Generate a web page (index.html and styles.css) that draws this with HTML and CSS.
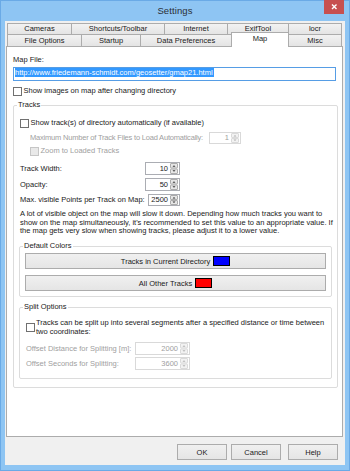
FILE: index.html
```html
<!DOCTYPE html>
<html>
<head>
<meta charset="utf-8">
<link rel="stylesheet" href="styles.css">
</head>
<body>
<div class="window">
  <div class="titlebar">
    <span class="title">Settings</span>
    <span class="close"><svg width="20" height="14" viewBox="0 0 20 14"><path d="M8 4.5 L12.5 9 M12.5 4.5 L8 9" stroke="#fff" stroke-width="1.4" fill="none"/></svg></span>
  </div>
  <div class="client">
    <div class="tabs">
      <div class="tabrow row1">
        <div class="tab t-cameras">Cameras</div>
        <div class="tab t-shortcuts">Shortcuts/Toolbar</div>
        <div class="tab t-internet">Internet</div>
        <div class="tab t-exif">ExifTool</div>
        <div class="tab t-locr">locr</div>
      </div>
      <div class="tabrow row2">
        <div class="tab t-fileopt">File Options</div>
        <div class="tab t-startup">Startup</div>
        <div class="tab t-datapref">Data Preferences</div>
        <div class="tab t-map active">Map</div>
        <div class="tab t-misc">Misc</div>
      </div>
    </div>
    <div class="panel">
      <div class="line maplbl">Map File:</div>
      <div class="urlbox"><span class="sel">http://www.friedemann-schmidt.com/geosetter/gmap21.html</span></div>
      <div class="check showimg"><span class="cb"></span><span>Show images on map after changing directory</span></div>

      <fieldset class="group tracks">
        <legend>Tracks</legend>
        <div class="check showtracks"><span class="cb"></span><span>Show track(s) of directory automatically (if available)</span></div>
        <div class="row maxnum disabled">
          <span class="rlabel l-maxnum">Maximum Number of Track Files to Load Automatically:</span>
          <div class="spin s-maxnum"><span class="val">1</span><svg class="arrows" width="8" height="10" viewBox="0 0 8 10"><rect x="0.5" y="0.5" width="7" height="4" rx="0.5" fill="#f2f2f2" stroke="#dadada"/><rect x="0.5" y="5.5" width="7" height="4" rx="0.5" fill="#f2f2f2" stroke="#dadada"/><path d="M2.5 3.5 L4 2 L5.5 3.5Z M2.5 6.5 L4 8 L5.5 6.5Z" fill="#b0b0b0"/></svg></div>
        </div>
        <div class="check zoomtracks disabled"><span class="cb"></span><span>Zoom to Loaded Tracks</span></div>
        <div class="row trackwidth">
          <span class="rlabel l-track">Track Width:</span>
          <div class="spin s-track"><span class="val">10</span><svg class="arrows" width="8" height="11" viewBox="0 0 8 11"><rect x="0.5" y="0.5" width="7" height="4.5" rx="0.5" fill="#e6e6e6" stroke="#acacac"/><rect x="0.5" y="6" width="7" height="4.5" rx="0.5" fill="#e6e6e6" stroke="#acacac"/><path d="M2.5 3.8 L4 2.2 L5.5 3.8Z M2.5 7.2 L4 8.8 L5.5 7.2Z" fill="#333"/></svg></div>
        </div>
        <div class="row opacity">
          <span class="rlabel l-track">Opacity:</span>
          <div class="spin s-track"><span class="val">50</span><svg class="arrows" width="8" height="11" viewBox="0 0 8 11"><rect x="0.5" y="0.5" width="7" height="4.5" rx="0.5" fill="#e6e6e6" stroke="#acacac"/><rect x="0.5" y="6" width="7" height="4.5" rx="0.5" fill="#e6e6e6" stroke="#acacac"/><path d="M2.5 3.8 L4 2.2 L5.5 3.8Z M2.5 7.2 L4 8.8 L5.5 7.2Z" fill="#333"/></svg></div>
        </div>
        <div class="row maxvis">
          <span class="rlabel l-maxvis">Max. visible Points per Track on Map:</span>
          <div class="spin s-maxvis"><span class="val">2500</span><svg class="arrows" width="8" height="10" viewBox="0 0 8 10"><rect x="0.5" y="0.5" width="7" height="4" rx="0.5" fill="#e6e6e6" stroke="#acacac"/><rect x="0.5" y="5.5" width="7" height="4" rx="0.5" fill="#e6e6e6" stroke="#acacac"/><path d="M2.5 3.5 L4 2 L5.5 3.5Z M2.5 6.5 L4 8 L5.5 6.5Z" fill="#333"/></svg></div>
        </div>
        <p class="note">A lot of visible object on the map will slow it down. Depending how much tracks you want to<br>show on the map simultaneously, it's recommended to set this value to an appropriate value. If<br>the map gets very slow when showing tracks, please adjust it to a lower value.</p>

        <fieldset class="group colors">
          <legend>Default Colors</legend>
          <button class="btn wide first">Tracks in Current Directory<span class="swatch blue"></span></button>
          <button class="btn wide second">All Other Tracks<span class="swatch red"></span></button>
        </fieldset>

        <fieldset class="group split">
          <legend>Split Options</legend>
          <div class="check splitcheck"><span class="cb"></span><span class="twoline">Tracks can be split up into several segments after a specified distance or time between<br>two coordinates:</span></div>
          <div class="row offdist disabled">
            <span class="rlabel l-off">Offset Distance for Splitting [m]:</span>
            <div class="spin s-off"><span class="val">2000</span><svg class="arrows" width="8" height="11" viewBox="0 0 8 11"><rect x="0.5" y="0.5" width="7" height="4.5" rx="0.5" fill="#f2f2f2" stroke="#dadada"/><rect x="0.5" y="6" width="7" height="4.5" rx="0.5" fill="#f2f2f2" stroke="#dadada"/><path d="M2.5 3.8 L4 2.2 L5.5 3.8Z M2.5 7.2 L4 8.8 L5.5 7.2Z" fill="#b0b0b0"/></svg></div>
          </div>
          <div class="row offsec disabled">
            <span class="rlabel l-off">Offset Seconds for Splitting:</span>
            <div class="spin s-off"><span class="val">3600</span><svg class="arrows" width="8" height="11" viewBox="0 0 8 11"><rect x="0.5" y="0.5" width="7" height="4.5" rx="0.5" fill="#f2f2f2" stroke="#dadada"/><rect x="0.5" y="6" width="7" height="4.5" rx="0.5" fill="#f2f2f2" stroke="#dadada"/><path d="M2.5 3.8 L4 2.2 L5.5 3.8Z M2.5 7.2 L4 8.8 L5.5 7.2Z" fill="#b0b0b0"/></svg></div>
          </div>
        </fieldset>
      </fieldset>
    </div>
    <div class="footer">
      <button class="btn dlg">OK</button>
      <button class="btn dlg cancel">Cancel</button>
      <button class="btn dlg help">Help</button>
    </div>
  </div>
</div>
</body>
</html>
```

FILE: styles.css
```css
html, body {
  margin: 0;
  padding: 0;
}
body {
  font-family: "Liberation Sans", Arial, sans-serif;
  font-size: 7.5px;
  color: #1a1a1a;
}
.window {
  width: 350px;
  height: 471px;
  box-sizing: border-box;
  background: #8ec5f3;
  border: 1px solid #6aaae6;
  display: flex;
  flex-direction: column;
}
.titlebar {
  height: 20px;
  position: relative;
  display: flex;
  justify-content: center;
  align-items: center;
  padding-bottom: 1px;
  box-sizing: border-box;
}
.title {
  font-size: 9.5px;
  color: #2b2f36;
  letter-spacing: 0.1px;
}
.close {
  position: absolute;
  right: 5px;
  top: -1px;
  width: 20px;
  height: 14px;
  background: #c75050;
  display: block;
}
.close svg { display: block; }
.client {
  margin: 0 4px;
  height: 444px;
  background: #f0f0f0;
  padding-top: 2px;
  box-sizing: border-box;
  display: flex;
  flex-direction: column;
}
.tabs {
  margin-left: 2px;
}
.tabrow {
  display: flex;
  align-items: flex-start;
}
.tab {
  box-sizing: border-box;
  height: 12px;
  border: 1px solid #acacac;
  background: linear-gradient(#f2f2f2, #e4e4e4);
  text-align: center;
  line-height: 10px;
  margin-left: -1px;
  white-space: nowrap;
}
.tab:first-child { margin-left: 0; }
.row2 { margin-top: -1px; }
.row2 .tab { height: 13px; line-height: 11px; }
.row2 .tab.active {
  height: 15px;
  margin-top: -2px;
  line-height: 12px;
  background: #fff;
  border-bottom: none;
  position: relative;
  z-index: 1;
}
.t-cameras { width: 65px; }
.t-shortcuts { width: 94px; }
.t-internet { width: 64px; }
.t-exif { width: 62px; }
.t-locr { width: 54px; }
.t-fileopt { width: 75px; }
.t-startup { width: 60px; }
.t-datapref { width: 92px; }
.t-map { width: 58px; }
.t-misc { width: 54px; }

.panel {
  margin: -1px 2px 0 1px;
  height: 391px;
  box-sizing: border-box;
  border: 1px solid #acacac;
  background: #fff;
  padding: 8px 6px 0 6px;
}
.line { line-height: 10px; height: 10px; }
.urlbox {
  margin-top: 2px;
  height: 14px;
  box-sizing: border-box;
  border: 1px solid #569de5;
  padding-left: 1px;
  display: flex;
  align-items: flex-start;
}
.sel {
  background: #3399ff;
  color: #fff;
  line-height: 9px;
  height: 9px;
  padding-right: 1px;
}
.check {
  display: flex;
  align-items: center;
  line-height: 10px;
}
.cb {
  width: 9px;
  height: 9px;
  box-sizing: border-box;
  border: 1px solid #707070;
  background: #fff;
  margin-right: 1.5px;
  flex: none;
}
.check.disabled { color: #a0a0a0; }
.check.disabled .cb { border-color: #c6c6c6; background: #e9e9e9; }
.showimg { margin-top: 5px; height: 10px; }

fieldset.group {
  margin: 0;
  min-width: 0;
  border: 1px solid #dcdcdc;
  border-radius: 2px;
}
fieldset.group legend {
  padding: 0 1px;
  line-height: 10px;
  height: 10px;
}
.tracks {
  margin-top: 4px !important;
  margin-right: -2px !important;
  padding: 0 5px 4px 6px;
}
.tracks > legend { margin-left: -3px; }
.showtracks { margin-top: 8px; height: 10px; }
.row {
  display: flex;
  align-items: center;
}
.rlabel { flex: none; line-height: 10px; white-space: nowrap; }
.disabled { color: #a0a0a0; }
.maxnum { margin-top: 4px; margin-left: 10px; }
.l-maxnum { width: 179px; letter-spacing: -0.2px; overflow: hidden; }
.zoomtracks { margin-top: 2px; margin-left: 10px; height: 10px; }
.trackwidth { margin-top: 6px; }
.opacity { margin-top: 3px; }
.maxvis { margin-top: 3px; }
.l-track { width: 125px; }
.l-maxvis { width: 128px; }

.spin {
  display: flex;
  align-items: center;
  box-sizing: border-box;
  border: 1px solid #abadb3;
  background: #fff;
  height: 12px;
  flex: none;
}
.spin .val {
  flex: 1;
  text-align: right;
  padding-right: 2px;
  line-height: 10px;
  color: #1a1a1a;
}
.spin .arrows { display: block; margin-right: 1px; flex: none; }
.disabled .spin { border-color: #d9d9d9; }
.disabled .spin .val { color: #a0a0a0; }
.s-maxnum { width: 32px; }
.s-track { width: 35px; height: 13px; }
.s-maxvis { width: 32px; }
.s-off { width: 55px; height: 13px; }

.note {
  margin: 4px 0 0 0;
  line-height: 8.7px;
  white-space: nowrap;
}
.colors {
  margin: 5px 0 0 -1px !important;
  padding: 0 5px 5px 5px;
}
.colors > legend { margin-left: -2px; }
.btn {
  box-sizing: border-box;
  border: 1px solid #acacac;
  background: linear-gradient(#f0f0f0, #e5e5e5);
  font-family: "Liberation Sans", Arial, sans-serif;
  font-size: 7.5px;
  color: #1a1a1a;
  padding: 0;
  margin: 0;
  display: flex;
  align-items: center;
  justify-content: center;
  height: 16px;
}
.wide { width: 100%; }
.btn.first { margin-top: 2px; }
.btn.second { margin-top: 6px; }
.swatch {
  width: 17px;
  height: 10px;
  box-sizing: border-box;
  border: 1px solid #000;
  margin-left: 3px;
  display: inline-block;
}
.swatch.blue { background: #0000ff; }
.swatch.red { background: #ff0000; }

.split {
  margin: 5px 0 4px -1px !important;
  padding: 0 5px 8px 5px;
}
.split > legend { margin-left: -2px; }
.splitcheck { margin-top: 6px; margin-left: 1px; }
.splitcheck .cb { margin-right: 1px; }
.twoline { line-height: 9px; white-space: nowrap; }
.offdist { margin-top: 6px; margin-left: 1px; }
.offsec { margin-top: 2px; margin-left: 1px; }
.l-off { width: 109px; }

.footer {
  display: flex;
  justify-content: flex-end;
  padding: 7px 7px 0 0;
}
.dlg { width: 50px; }
.cancel { margin-left: 4px; }
.help { margin-left: 7px; }
```
